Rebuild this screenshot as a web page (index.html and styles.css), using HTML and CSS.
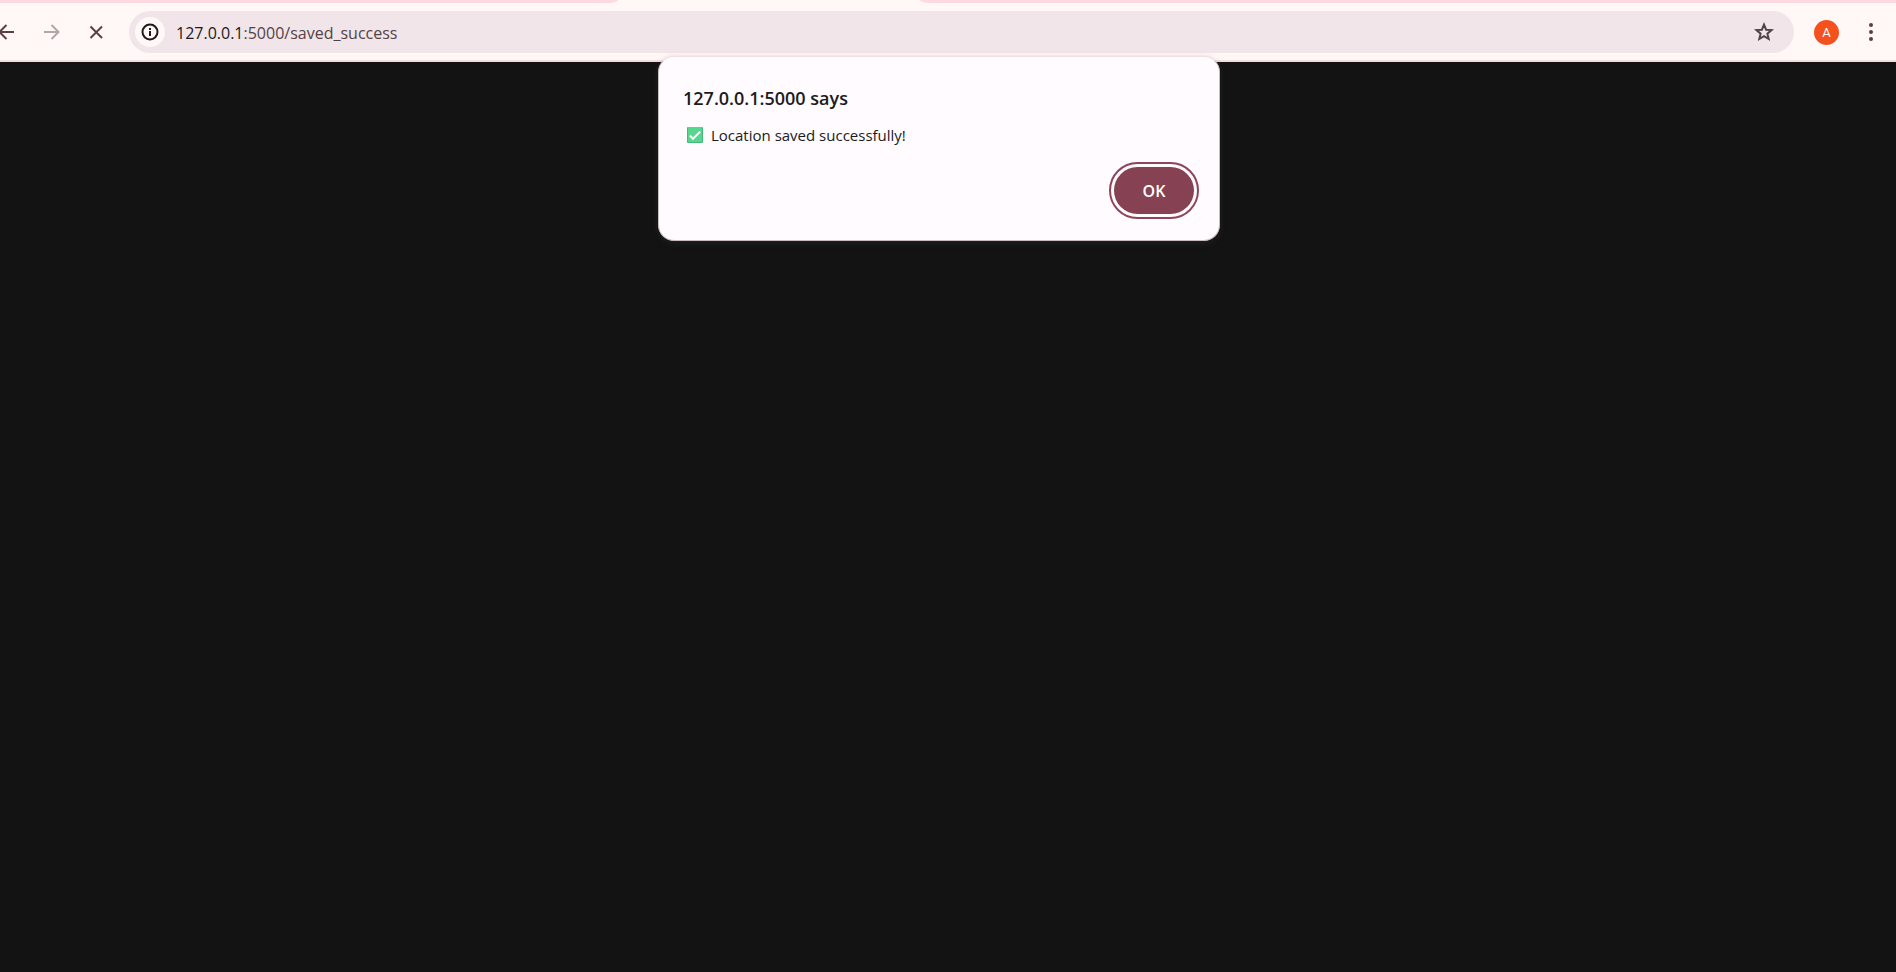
FILE: index.html
```html
<!DOCTYPE html>
<html lang="en">
<head>
<meta charset="utf-8">
<title>127.0.0.1:5000/saved_success</title>
<link rel="stylesheet" href="styles.css">
</head>
<body>
<header class="chrome">
  <div class="tabstrip">
    <div class="tabs-before"></div>
    <div class="tab-active"></div>
    <div class="tabs-after"></div>
  </div>
  <div class="toolbar">
    <nav class="nav" aria-label="Navigation">
      <button class="icon-button" type="button" aria-label="Back">
        <svg width="18" height="18" viewBox="0 0 18 18"><path d="M17 9H3M9.500 2 2.500 9 9.500 16"/></svg>
      </button>
      <button class="icon-button icon-disabled" type="button" aria-label="Forward" disabled>
        <svg width="18" height="18" viewBox="0 0 18 18"><path d="M2 9H16M9.500 2 16.500 9 9.500 16"/></svg>
      </button>
      <button class="icon-button" type="button" aria-label="Stop loading">
        <svg width="18" height="18" viewBox="0 0 18 18"><path d="M3.500 3.500 15 15M15 3.500 3.500 15"/></svg>
      </button>
    </nav>
    <div class="omnibox">
      <button class="site-info" type="button" aria-label="View site information">
        <svg width="18" height="18" viewBox="0 0 18 18"><circle cx="9" cy="9" r="7.500"/><path d="M9 8v5M9 5v2"/></svg>
      </button>
      <a class="url" href="#"><span class="host">127.0.0.1</span>:5000/saved_success</a>
      <button class="star" type="button" aria-label="Bookmark this tab">
        <svg width="20" height="20" viewBox="0 0 20 20"><path d="M10 2.600 12.100 7.700 17.600 8.100 13.400 11.700 14.700 17 10 14.200 5.300 17 6.600 11.700 2.400 8.100 7.900 7.700Z"/></svg>
      </button>
    </div>
    <button class="avatar" type="button" aria-label="Profile">A</button>
    <button class="menu" type="button" aria-label="Menu">
      <svg width="18" height="18" viewBox="0 0 18 18"><circle cx="9" cy="2" r="2"/><circle cx="9" cy="9" r="2"/><circle cx="9" cy="16" r="2"/></svg>
    </button>
  </div>
</header>
<main class="page">
  <section class="dialog" role="alertdialog" aria-labelledby="dialog-title" aria-describedby="dialog-text">
    <h1 class="dialog-title" id="dialog-title">127.0.0.1:5000 says</h1>
    <p class="dialog-text" id="dialog-text">
      <svg class="check" width="16" height="16" viewBox="0 0 16 16" role="img" aria-label="Check mark"><rect class="check-edge" width="16" height="16" rx="1"/><rect class="check-fill" x="1" width="14" height="15"/><path d="M2.800 8.500 6 11.800 13.200 4.600"/></svg>
      <span>Location saved successfully!</span>
    </p>
    <div class="dialog-actions">
      <button class="ok" type="button">OK</button>
    </div>
  </section>
</main>
</body>
</html>
```
FILE: styles.css
```css
* {
  box-sizing: border-box;
}

body {
  margin: 0;
  min-height: 100vh;
  display: flex;
  flex-direction: column;
  background: #131313;
  font-family: "Open Sans", "Noto Sans", sans-serif;
}

button {
  padding: 0;
  border: 0;
  background: none;
  font-family: inherit;
  display: flex;
  align-items: center;
  justify-content: center;
}

svg {
  display: block;
  flex: none;
}

.chrome {
  background: #fff8f6;
  border-bottom: 2px solid #f5dde0;
}

.tabstrip {
  display: flex;
  height: 3px;
}

.tabs-before {
  width: 618px;
  background: #ffd9e0;
  border-bottom-right-radius: 10px 3px;
}

.tab-active {
  width: 302px;
}

.tabs-after {
  flex: 1;
  background: #ffd9e0;
  border-bottom-left-radius: 10px 3px;
}

.toolbar {
  display: flex;
  align-items: center;
  padding: 8px 16px 7px 0;
}

.nav {
  display: flex;
  gap: 27px;
  margin-left: -3px;
  margin-right: 24px;
}

.icon-button {
  width: 18px;
  height: 18px;
  color: #5c3f45;
}

.icon-button path {
  fill: none;
  stroke: currentColor;
  stroke-width: 2;
}

.icon-disabled {
  color: #b5a5a8;
}

.omnibox {
  flex: 1;
  display: flex;
  align-items: center;
  height: 42px;
  padding: 0 20px 0 6px;
  border-radius: 21px;
  background: #f1e5e9;
}

.site-info {
  width: 30px;
  height: 30px;
  border-radius: 50%;
  background: #fff8f6;
}

.site-info svg {
  fill: none;
  stroke: #22191b;
  stroke-width: 2;
}

.url {
  flex: 1;
  margin-left: 11px;
  padding-top: 2px;
  font-size: 16px;
  line-height: 24px;
  color: #514347;
  text-decoration: none;
}

.host {
  color: #22191b;
}

.star path {
  fill: none;
  stroke: #514347;
  stroke-width: 2;
}

.avatar {
  width: 25px;
  height: 25px;
  margin-left: 20px;
  border-radius: 50%;
  background: #f4511e;
  color: #fff;
  font-family: Roboto, sans-serif;
  font-size: 13px;
}

.menu {
  margin-left: 23px;
}

.menu svg {
  fill: #5c3f45;
}

.page {
  position: relative;
  flex: 1;
}

.dialog {
  position: absolute;
  top: -6px;
  left: 0;
  right: 18px;
  width: 562px;
  margin: 0 auto;
  padding: 27px 25px 26px 24px;
  border: 1px solid #c9bcbf;
  border-top-color: #f5dde0;
  border-radius: 16px;
  background: #fffbff;
  box-shadow: 0 2px 6px rgba(60, 64, 67, 0.3);
  color: #201a1b;
}

.dialog-title {
  margin: 0;
  font-size: 18px;
  font-weight: 600;
  line-height: 28px;
}

.dialog-text {
  display: flex;
  align-items: center;
  gap: 8px;
  margin: 11px 0 20px 4px;
  font-size: 15px;
  line-height: 24px;
}

.check-edge {
  fill: #45b97c;
}

.check-fill {
  fill: #57d68d;
}

.check path {
  fill: none;
  stroke: #fff;
  stroke-width: 2;
}

.dialog-actions {
  display: flex;
  justify-content: flex-end;
}

.ok {
  width: 80px;
  height: 47px;
  border-radius: 24px;
  background: #864152;
  color: #fff;
  font-size: 16px;
  font-weight: 600;
  outline: 2px solid #8f4457;
  outline-offset: 3px;
}
```
